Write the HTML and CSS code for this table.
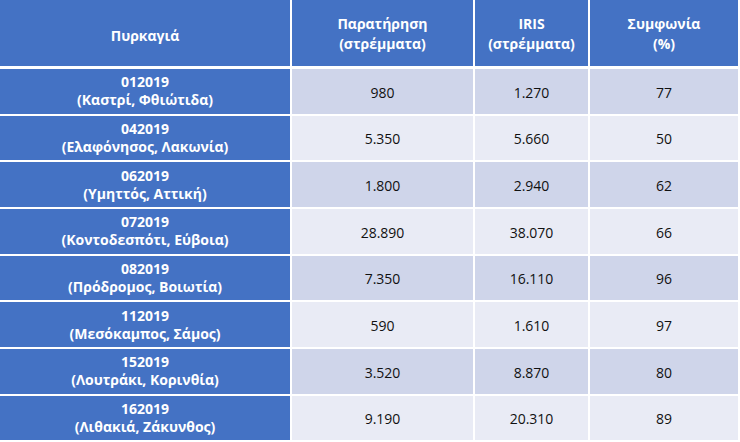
FILE: index.html
```html
<!DOCTYPE html>
<html lang="el">
<head>
<meta charset="utf-8">
<title>Πυρκαγιές</title>
<link rel="stylesheet" href="styles.css">
</head>
<body>
<div class="table">
  <div class="row head">
    <div class="cell h first"><span>Πυρκαγιά</span></div>
    <div class="cell h"><span>Παρατήρηση<br>(στρέμματα)</span></div>
    <div class="cell h"><span>IRIS<br>(στρέμματα)</span></div>
    <div class="cell h"><span>Συμφωνία<br>(%)</span></div>
  </div>
  <div class="row odd">
    <div class="cell name">012019<br>(Καστρί, Φθιώτιδα)</div>
    <div class="cell d">980</div><div class="cell d">1.270</div><div class="cell d">77</div>
  </div>
  <div class="row even">
    <div class="cell name">042019<br>(Ελαφόνησος, Λακωνία)</div>
    <div class="cell d">5.350</div><div class="cell d">5.660</div><div class="cell d">50</div>
  </div>
  <div class="row odd">
    <div class="cell name">062019<br>(Υμηττός, Αττική)</div>
    <div class="cell d">1.800</div><div class="cell d">2.940</div><div class="cell d">62</div>
  </div>
  <div class="row even">
    <div class="cell name">072019<br>(Κοντοδεσπότι, Εύβοια)</div>
    <div class="cell d">28.890</div><div class="cell d">38.070</div><div class="cell d">66</div>
  </div>
  <div class="row odd">
    <div class="cell name">082019<br>(Πρόδρομος, Βοιωτία)</div>
    <div class="cell d">7.350</div><div class="cell d">16.110</div><div class="cell d">96</div>
  </div>
  <div class="row even">
    <div class="cell name">112019<br>(Μεσόκαμπος, Σάμος)</div>
    <div class="cell d">590</div><div class="cell d">1.610</div><div class="cell d">97</div>
  </div>
  <div class="row odd">
    <div class="cell name">152019<br>(Λουτράκι, Κορινθία)</div>
    <div class="cell d">3.520</div><div class="cell d">8.870</div><div class="cell d">80</div>
  </div>
  <div class="row even">
    <div class="cell name">162019<br>(Λιθακιά, Ζάκυνθος)</div>
    <div class="cell d">9.190</div><div class="cell d">20.310</div><div class="cell d">89</div>
  </div>
</div>
</body>
</html>
```
FILE: styles.css
```css
html, body {
  margin: 0;
  padding: 0;
  background: #ffffff;
}
body {
  width: 740px;
  height: 442px;
  overflow: hidden;
  font-family: "Open Sans", "Noto Sans", sans-serif;
}
.table {
  display: flex;
  flex-direction: column;
  gap: 2px;
}
.row {
  display: grid;
  grid-template-columns: 290px 181px 113px 148px;
  column-gap: 2px;
  height: 44.67px;
}
.row.head {
  height: 66px;
  margin-bottom: 1px;
}
.cell {
  display: flex;
  align-items: center;
  justify-content: center;
  text-align: center;
}
.h {
  background: #4472c4;
  color: #ffffff;
  font-weight: 700;
  font-size: 14px;
  line-height: 20px;
  padding-top: 2px;
}
.h.first {
  padding-top: 5px;
}
.name {
  background: #4472c4;
  color: #ffffff;
  font-weight: 700;
  font-size: 14px;
  line-height: 18px;
}
.d {
  color: #111111;
  font-size: 14px;
  padding-top: 2px;
}
.odd .d {
  background: #cfd5ea;
}
.even .d {
  background: #e9ebf5;
}
```
